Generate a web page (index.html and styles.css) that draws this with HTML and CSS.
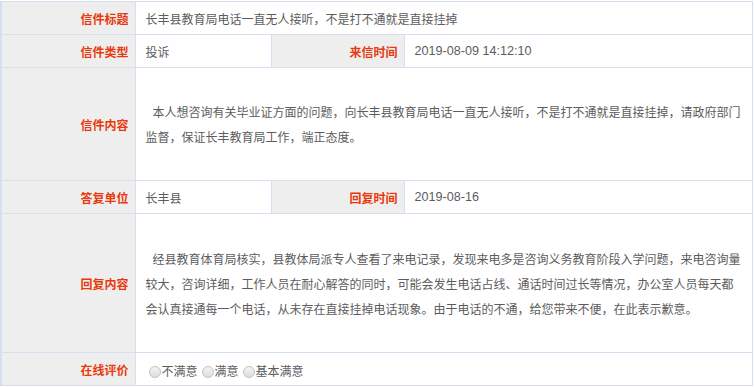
FILE: index.html
```html
<!DOCTYPE html>
<html lang="zh-CN">

<head>
    <meta charset="UTF-8">
    <meta name="viewport" content="width=device-width, initial-scale=1.0">
    <title>信件详情</title>
    <link rel="stylesheet" href="styles.css">
</head>

<body>
    <table class="letter-table">
        <colgroup>
            <col class="col-label">
            <col class="col-value">
            <col class="col-label2">
            <col class="col-wide">
        </colgroup>
        <tr>
            <th>信件标题</th>
            <td colspan="3">长丰县教育局电话一直无人接听，不是打不通就是直接挂掉</td>
        </tr>
        <tr>
            <th>信件类型</th>
            <td>投诉</td>
            <th>来信时间</th>
            <td class="date">2019-08-09 14:12:10</td>
        </tr>
        <tr class="content-row">
            <th>信件内容</th>
            <td colspan="3" class="content">
                <p>本人想咨询有关毕业证方面的问题，向长丰县教育局电话一直无人接听，不是打不通就是直接挂掉，请政府部门监督，保证长丰教育局工作，端正态度。</p>
            </td>
        </tr>
        <tr>
            <th>答复单位</th>
            <td>长丰县</td>
            <th>回复时间</th>
            <td class="date">2019-08-16</td>
        </tr>
        <tr class="reply-row">
            <th>回复内容</th>
            <td colspan="3" class="content">
                <p>经县教育体育局核实，县教体局派专人查看了来电记录，发现来电多是咨询义务教育阶段入学问题，来电咨询量较大，咨询详细，工作人员在耐心解答的同时，可能会发生电话占线、通话时间过长等情况，办公室人员每天都会认真接通每一个电话，从未存在直接挂掉电话现象。由于电话的不通，给您带来不便，在此表示歉意。</p>
            </td>
        </tr>
        <tr>
            <th>在线评价</th>
            <td colspan="3" class="rating"><label><input type="radio" name="pj" value="1">不满意</label><label><input type="radio" name="pj" value="2">满意</label><label><input type="radio" name="pj" value="3">基本满意</label></td>
        </tr>
    </table>
</body>

</html>
```

FILE: styles.css
```css
body {
    margin: 0;
    padding-top: 1px;
    background: #fff;
    font-family: "Noto Sans CJK SC", "Liberation Sans", sans-serif;
    font-size: 12px;
}

.letter-table {
    border-collapse: collapse;
    table-layout: fixed;
    width: 753px;
    border-left: 2px solid #d6dff0;
}

.col-label {
    width: 134px;
}

.col-value {
    width: 136px;
}

.col-label2 {
    width: 133px;
}

.letter-table th,
.letter-table td {
    border: 1px solid #d6dff0;
    height: 32px;
    padding: 0;
    vertical-align: middle;
}

.letter-table th {
    background-color: #eeeeee;
    color: #e8390c;
    font-weight: bold;
    text-align: right;
    padding-right: 6px;
}

.letter-table td {
    color: #5c5c5c;
    padding-left: 10px;
    padding-right: 10px;
}

/* dates read wider than the CJK face's own digits */
.date {
    color: #555;
    font-family: "Liberation Sans", "Noto Sans CJK SC", sans-serif;
    font-size: 12.6px;
}

.content p {
    margin: 0;
    text-indent: 7px;
}

.content-row td {
    height: 112px;
    line-height: 25px;
}

.reply-row td {
    height: 138px;
    line-height: 25px;
}

.rating label {
    display: inline-block;
    vertical-align: middle;
}

.rating input {
    appearance: none;
    -webkit-appearance: none;
    width: 12px;
    height: 12px;
    margin: 0 1px 0 4px;
    border: 1px solid #c4c4c4;
    border-radius: 50%;
    background: linear-gradient(#f4f4f4, #dcdcdc);
    vertical-align: -2px;
}

.rating label:first-child input {
    margin-left: 3px;
}
```
